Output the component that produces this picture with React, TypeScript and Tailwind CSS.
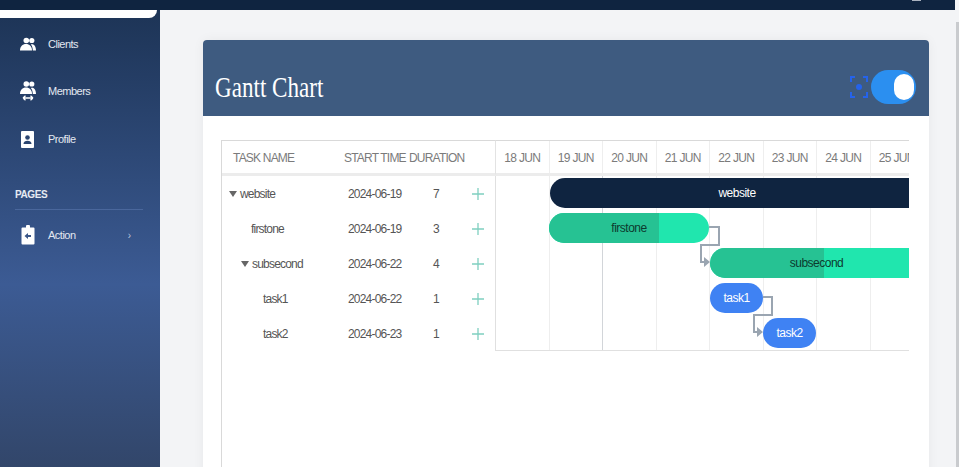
const days = ["18 JUN", "19 JUN", "20 JUN", "21 JUN", "22 JUN", "23 JUN", "24 JUN", "25 JUN"];

const tasks = [
  { name: "website", pad: "pl-[7px]", open: true, start: "2024-06-19", dur: 7 },
  { name: "firstone", pad: "pl-[29px]", open: false, start: "2024-06-19", dur: 3 },
  { name: "subsecond", pad: "pl-[19px]", open: true, start: "2024-06-22", dur: 4 },
  { name: "task1", pad: "pl-[41px]", open: false, start: "2024-06-22", dur: 1 },
  { name: "task2", pad: "pl-[41px]", open: false, start: "2024-06-23", dur: 1 },
];

function PeopleShapes() {
  return (
    <>
      <circle cx="6.300" cy="3" r="2.800" />
      <circle cx="11.800" cy="3" r="2.600" />
      <path d="M0 13c0-4 2.500-6.500 6-6.500s6 2.500 6 6.500z" />
      <path d="M12.800 13c0-2.500-.6-4.500-2-6 .4-.2.800-.3 1.200-.3 2.500 0 4 2.500 4 6.300z" />
    </>
  );
}

function Clients() {
  return (
    <svg viewBox="0 0 16 13" className="h-[14px] w-[16px]" fill="white">
      <PeopleShapes />
    </svg>
  );
}

function Members() {
  return (
    <svg viewBox="0 0 16 20" className="h-[20px] w-[16px]" fill="white">
      <PeopleShapes />
      <path d="M3 17h10M3 17l2.500-2.200M3 17l2.500 2.200M13 17l-2.500-2.200M13 17l-2.500 2.200" stroke="white" strokeWidth="1.300" fill="none" />
    </svg>
  );
}

function ProfileIcon() {
  return (
    <svg viewBox="0 0 13 17" className="h-[17px] w-[13px]">
      <rect width="13" height="17" rx="1" fill="white" />
      <circle cx="6.500" cy="6.500" r="2.300" fill="#2b4570" />
      <path d="M2.500 13c0-2.300 1.800-3.300 4-3.300s4 1 4 3.300z" fill="#2b4570" />
    </svg>
  );
}

function ActionIcon() {
  return (
    <svg viewBox="0 0 14 20" className="h-[20px] w-[14px]">
      <path d="M1.500 2.500h3.500V1.500a2 2 0 0 1 4 0v1h3.500a1 1 0 0 1 1 1V18.500a1 1 0 0 1-1 1h-11a1 1 0 0 1-1-1V3.500a1 1 0 0 1 1-1z" fill="white" />
      <path d="M3.500 11 7 8v2h3v2H7v2z" fill="#3a5688" />
    </svg>
  );
}

function NavItem({ icon, label, className }: { icon: React.ReactNode; label: string; className?: string }) {
  return (
    <div className={"flex h-[24px] items-center " + (className ?? "")}>
      <div className="flex w-[48px] justify-center pl-[7px]">{icon}</div>
      <span className="text-[11px] tracking-[-0.5px] text-[#e3e8f1]">{label}</span>
    </div>
  );
}

function Sidebar() {
  return (
    <aside className="flex w-[160px] shrink-0 flex-col bg-gradient-to-b from-[#1d3456] via-[#3c5b94] via-60% to-[#32466a]">
      <div className="mr-[3px] h-[8px] rounded-br-[10px] bg-white" />
      <NavItem className="mt-[14px]" icon={<Clients />} label="Clients" />
      <NavItem className="mt-[23px]" icon={<Members />} label="Members" />
      <NavItem className="mt-[24px]" icon={<ProfileIcon />} label="Profile" />
      <div className="mx-[15px] mr-[17px] mt-[36px] border-b border-[#4a679c] pb-[7px] text-[10px] font-bold tracking-[-0.4px] text-[#e6ebf3]">
        PAGES
      </div>
      <div className="mt-[13px] flex items-center pr-[29px]">
        <NavItem className="flex-1" icon={<ActionIcon />} label="Action" />
        <span className="text-[10px] text-[#b9c6dc]">›</span>
      </div>
    </aside>
  );
}

function Bar({ left, width, color, fill, progress, text, label }: {
  left: string; width: string; color: string; fill?: string; progress?: string; text: string; label: string;
}) {
  return (
    <div className="h-[35px] pt-[2px]">
      <div className={`relative flex h-[30px] items-center justify-center overflow-hidden rounded-[15px] ${left} ${width} ${color}`}>
        {fill && <div className={`absolute inset-y-0 left-0 ${progress} ${fill}`} />}
        <span className={`relative text-[12px] tracking-[-0.5px] ${text}`}>{label}</span>
      </div>
    </div>
  );
}

function Gantt() {
  return (
    <div className="ml-[18px] mt-[24px] flex h-full w-[688px] border-l border-[#d9d9d9]">
      <div className="w-[273px] shrink-0">
        <div className="grid h-[36px] grid-cols-[122px_65px_56px_30px] items-center border-b-[3px] border-t border-b-[#ececec] border-t-[#d9d9d9] pt-[2px] text-[12px] tracking-[-0.8px] text-[#7b7b7b]">
          <span className="pl-[11px]">TASK NAME</span>
          <span className="whitespace-nowrap">START TIME</span>
          <span className="overflow-hidden whitespace-nowrap">DURATION</span>
          <span />
        </div>
        {tasks.map((t) => (
          <div key={t.name} className="grid h-[35px] grid-cols-[122px_65px_56px_30px] items-center text-[12px] tracking-[-0.8px] text-[#555]">
            <div className={`flex items-center ${t.pad}`}>
              {t.open && <span className="mr-[3px] h-0 w-0 border-x-[4px] border-t-[6px] border-x-transparent border-t-[#666]" />}
              {t.name}
            </div>
            <span className="pl-[4px]">{t.start}</span>
            <span className="pl-[24px]">{t.dur}</span>
            <svg viewBox="0 0 12 12" className="ml-[7px] h-[12px] w-[12px]">
              <path d="M6 0v12M0 6h12" stroke="#7fcfc0" strokeWidth="1.300" />
            </svg>
          </div>
        ))}
      </div>

      <div className="w-[414px] shrink-0 overflow-hidden">
        <div className="flex h-[36px] w-[430px] border-b-[3px] border-l border-t border-b-[#ececec] border-l-[#e3e3e3] border-t-[#d9d9d9]">
          {days.map((d) => (
            <div key={d} className="flex w-[53.5px] shrink-0 items-center justify-center border-r border-[#eee] pt-[2px] text-[12px] tracking-[-0.7px] text-[#7b7b7b]">
              {d}
            </div>
          ))}
        </div>
        <div className="relative h-[175px] border-b border-l border-[#e0e0e0]">
          <div className="absolute inset-0 flex w-[430px]">
            {days.map((d, i) => (
              <div key={d} className={`w-[53.5px] shrink-0 border-r ${i === 1 ? "border-[#d2d5d9]" : "border-[#eeeeee]"}`} />
            ))}
          </div>
          <svg className="absolute left-0 top-0 h-[175px] w-[414px]" fill="none" stroke="#9aa5b1" strokeWidth="2">
            <path d="M213 51h10v18h-18v17h3" />
            <path d="M267 121h9v18h-18v17h3" />
            <path d="M208 81l6 5-6 5z M261 151l6 5-6 5z" fill="#9aa5b1" stroke="none" />
          </svg>
          <div className="relative w-[440px]">
            <Bar left="ml-[54px]" width="w-[374px]" color="bg-[#0f2440]" text="text-white" label="website" />
            <Bar left="ml-[53px]" width="w-[160px]" color="bg-[#20e6ae]" fill="bg-[#26c293]" progress="w-[69%]" text="text-[#0d3a2e]" label="firstone" />
            <Bar left="ml-[214px]" width="w-[213px]" color="bg-[#20e6ae]" fill="bg-[#26c293]" progress="w-[53.5%]" text="text-[#0d3a2e]" label="subsecond" />
            <Bar left="ml-[214px]" width="w-[53px]" color="bg-[#3f82f3]" text="text-white" label="task1" />
            <Bar left="ml-[267px]" width="w-[53px]" color="bg-[#3f82f3]" text="text-white" label="task2" />
          </div>
        </div>
      </div>
    </div>
  );
}

export default function App() {
  return (
    <div className="flex h-[467px] overflow-hidden bg-[#f3f4f6] font-['Liberation_Sans',sans-serif]">
      <div className="flex min-w-0 flex-1 flex-col">
        <div className="flex h-[10px] shrink-0 justify-end bg-[#0f2440] pr-[34px]">
          <div className="h-[1px] w-[9px] bg-[#aab2bf]" />
        </div>
        <div className="flex min-h-0 flex-1">
          <Sidebar />
          <main className="min-w-0 flex-1 pl-[43px] pt-[30px]">
            <div className="h-[600px] w-[726px] overflow-hidden rounded-t-[4px] bg-white shadow-[0_0_12px_rgba(0,0,0,0.05)]">
              <div className="flex h-[76px] items-end justify-between bg-[#3e5b80] pb-[11px] pl-[12px] pr-[13px]">
                <h1 className="origin-left scale-x-[0.77] whitespace-nowrap font-['Liberation_Serif',serif] text-[30px] leading-[36px] text-white">
                  Gantt Chart
                </h1>
                <div className="mb-[1px] flex items-center gap-[3px]">
                  <svg viewBox="0 0 18 24" className="h-[24px] w-[18px]" fill="none" stroke="#2563eb" strokeWidth="2">
                    <path d="M1 7V2h4M13 2h4v5M17 17v5h-4M5 22H1v-5" />
                    <circle cx="9" cy="12" r="3" fill="#2563eb" stroke="none" />
                  </svg>
                  <div className="flex h-[34px] w-[45px] items-center justify-end rounded-full bg-[#2b8ff0] pr-[2px]">
                    <div className="h-[26px] w-[20px] rounded-full bg-white" />
                  </div>
                </div>
              </div>
              <Gantt />
            </div>
          </main>
        </div>
      </div>
      <div className="w-[4px] shrink-0 pl-[1px] pt-[22px]">
        <div className="h-full bg-[#c9cbce]" />
      </div>
    </div>
  );
}
